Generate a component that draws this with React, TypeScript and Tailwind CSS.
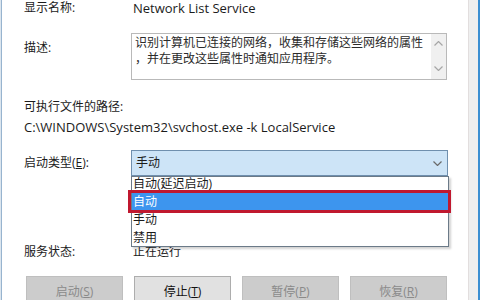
const font = "font-['Open_Sans','Noto_Sans_CJK_SC',sans-serif]";

const Chevron = ({ up = false, color = "#a6a6a6" }: { up?: boolean; color?: string }) => (
  <svg width="9" height="5" viewBox="0 0 9 5" className="block">
    <polyline
      points={up ? "0.5,4.5 4.5,0.5 8.5,4.5" : "0.5,0.5 4.5,4.5 8.5,0.5"}
      fill="none"
      stroke={color}
      strokeWidth="1.2"
    />
  </svg>
);

const Btn = ({ label, k, enabled = false }: { label: string; k: string; enabled?: boolean }) => (
  <div
    className={
      enabled
        ? "w-[97px] h-[30px] pt-[2px] flex items-center justify-center bg-[#e1e1e1] border border-[#adadad] text-[#111]"
        : "w-[97px] h-[30px] pt-[2px] flex items-center justify-center bg-[#cccccc] border border-[#bfbfbf] text-[#8a8a8a]"
    }
  >
    {label}(<span className="underline">{k}</span>)
  </div>
);

export default function App() {
  return (
    <div className={`w-[480px] h-[300px] overflow-hidden bg-white flex text-[12px] text-[#1b1b1b] ${font}`}>
      <div className="w-[2px] bg-[#dbe5ee] border-r border-[#98b4cf]" />

      <div className="flex-1 pl-[22px] pr-[21px] flex flex-col">
        {/* display name */}
        <div className="flex h-4 leading-4">
          <span className="w-[107px]">显示名称:</span>
          <span className="pl-[2px] text-[13px]">Network List Service</span>
        </div>

        {/* description */}
        <div className="flex mt-[17px]">
          <span className="w-[107px] pt-[7px] leading-4">描述:</span>
          <div className="flex-1 h-[47px] border border-[#b9b9b9] flex">
            <div className="flex-1 pl-[3px] pt-px leading-4 text-[#2b2b2b] whitespace-nowrap overflow-hidden">
              <div>识别计算机已连接的网络，收集和存储这些网络的属性</div>
              <div>，并在更改这些属性时通知应用程序。</div>
            </div>
            <div className="w-[15px] bg-[#f0f0f0] flex flex-col justify-between items-center pt-[7px] pb-[8px]">
              <Chevron up />
              <Chevron />
            </div>
          </div>
        </div>

        {/* executable path */}
        <div className="mt-[19px] leading-4">可执行文件的路径:</div>
        <div className="mt-1 leading-4 text-[13px]">C:\WINDOWS\System32\svchost.exe -k LocalService</div>

        {/* startup type */}
        <div className="flex items-center mt-[15px]">
          <span className="w-[107px]">
            启动类型(<span className="underline">E</span>):
          </span>
          <div className="relative flex-1 mr-[-1px] h-[26px] border border-[#6f8fae] bg-[#cde4f7] flex items-center justify-between pl-[4px] pr-[5px]">
            <span>手动</span>
            <Chevron color="#6a6a6a" />

            <div className="absolute z-10 left-[-1px] right-[-2px] top-[25px] h-[71px] bg-white border border-[#6b7a88] shadow-[2px_2px_2px_rgba(0,0,0,0.18)]">
              <div className="h-[16px] leading-[14px] pl-px overflow-hidden">自动(延迟启动)</div>
              <div className="h-[18px] leading-[18px] pl-px bg-[#3d95ee] text-white">自动</div>
              <div className="h-[18px] leading-[18px] pl-px">手动</div>
              <div className="h-[18px] leading-[18px] pl-px">禁用</div>
              <div className="absolute left-[-4px] top-[13px] w-[323px] h-[23px] border-[3px] border-[#c0182f]" />
            </div>
          </div>
        </div>

        {/* separator */}
        <div className="mt-[52px] h-px bg-[#c9c9c9]" />

        {/* status */}
        <div className="flex mt-[16px] leading-4">
          <span className="w-[107px]">服务状态:</span>
          <span className="pl-[2px]">正在运行</span>
        </div>

        {/* buttons */}
        <div className="flex gap-[11px] mt-[16px] ml-[2px]">
          <Btn label="启动" k="S" />
          <Btn label="停止" k="T" enabled />
          <Btn label="暂停" k="P" />
          <Btn label="恢复" k="R" />
        </div>
      </div>

      <div className="w-[10px] bg-[#efefef] border-l border-[#e2dede]" />
      <div className="w-[2px] bg-[#3b8fd2]" />
    </div>
  );
}
